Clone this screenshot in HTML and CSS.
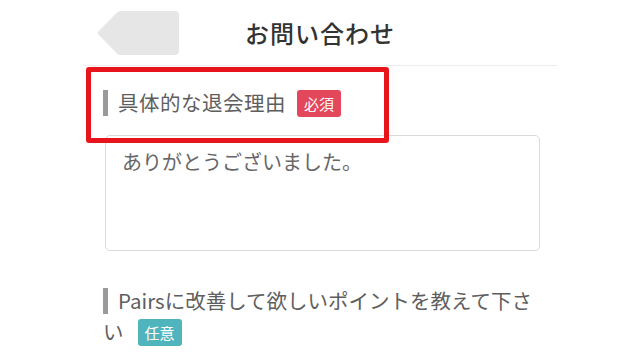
FILE: index.html
```html
<!DOCTYPE html>
<html lang="ja">
<head>
<meta charset="utf-8">
<title>お問い合わせ</title>
<link rel="stylesheet" href="styles.css">
</head>
<body>
<div class="phone">
  <header class="header">
    <div class="back">
      <svg width="82" height="44" viewBox="0 0 82 44" aria-hidden="true">
        <path d="M1 23 Q0 22 1 21 L20 1.5 Q21.5 0 23.5 0 H78 Q82 0 82 4 V40 Q82 44 78 44 H23.5 Q21.5 44 20 42.5 Z" fill="#e6e6e6"/>
      </svg>
    </div>
    <h1 class="title">お問い合わせ</h1>
    <div class="spacer"></div>
  </header>
  <main class="content">
    <div class="label label-first"><span class="bar"></span>具体的な退会理由<span class="badge badge-required">必須</span></div>
    <div class="textarea">ありがとうございました。</div>
    <div class="label label-second"><span class="bar"></span>Pairsに改善して欲しいポイントを教えて下さ<br>い<span class="badge badge-optional">任意</span></div>
  </main>
  <div class="highlight"></div>
</div>
</body>
</html>
```
FILE: styles.css
```css
html, body {
  margin: 0;
  padding: 0;
  background: #ffffff;
}
body {
  font-family: "Noto Sans CJK JP", "Noto Sans", sans-serif;
  width: 640px;
  height: 360px;
  overflow: hidden;
}
.phone {
  position: relative;
  width: 474px;
  margin-left: 83px;
}
.header {
  height: 65px;
  border-bottom: 1px solid #ececec;
  display: grid;
  grid-template-columns: 1fr auto 1fr;
  align-items: center;
}
.back {
  padding-left: 14px;
  display: flex;
  align-items: center;
}
.back svg {
  display: block;
}
.title {
  margin: 0;
  font-size: 24px;
  font-weight: 500;
  color: #333333;
  line-height: 1;
  letter-spacing: 1px;
}
.content {
  padding: 0 17px 0 20px;
}
.label {
  font-size: 20.5px;
  color: #5e5e5e;
}
.label-first {
  margin-top: 22px;
  line-height: 28px;
  height: 28px;
  letter-spacing: 0.5px;
}
.label-second {
  margin-top: 34px;
  line-height: 30px;
  letter-spacing: 0;
}
.bar {
  display: inline-block;
  width: 5px;
  height: 26px;
  background: #9a9a9a;
  vertical-align: middle;
  margin-right: 10px;
  position: relative;
  top: -2px;
}
.badge {
  display: inline-block;
  height: 27px;
  line-height: 27px;
  padding: 0 7px;
  border-radius: 3px;
  font-size: 15px;
  color: #ffffff;
  letter-spacing: 0;
  vertical-align: middle;
  position: relative;
  top: -2px;
}
.badge-required {
  margin-left: 11px;
  background: #e2475b;
}
.badge-optional {
  margin-left: 14px;
  background: #4fb4bc;
}
.textarea {
  margin-top: 19px;
  margin-left: 2px;
  height: 116px;
  box-sizing: border-box;
  border: 1px solid #d9d9d9;
  border-radius: 5px;
  padding: 12px 16px;
  font-size: 20px;
  line-height: 28px;
  color: #666666;
  letter-spacing: 0;
}
.highlight {
  position: absolute;
  left: 3px;
  top: 67px;
  width: 303px;
  height: 76px;
  box-sizing: border-box;
  border: 5px solid #e8141b;
  border-radius: 3px;
}
```
